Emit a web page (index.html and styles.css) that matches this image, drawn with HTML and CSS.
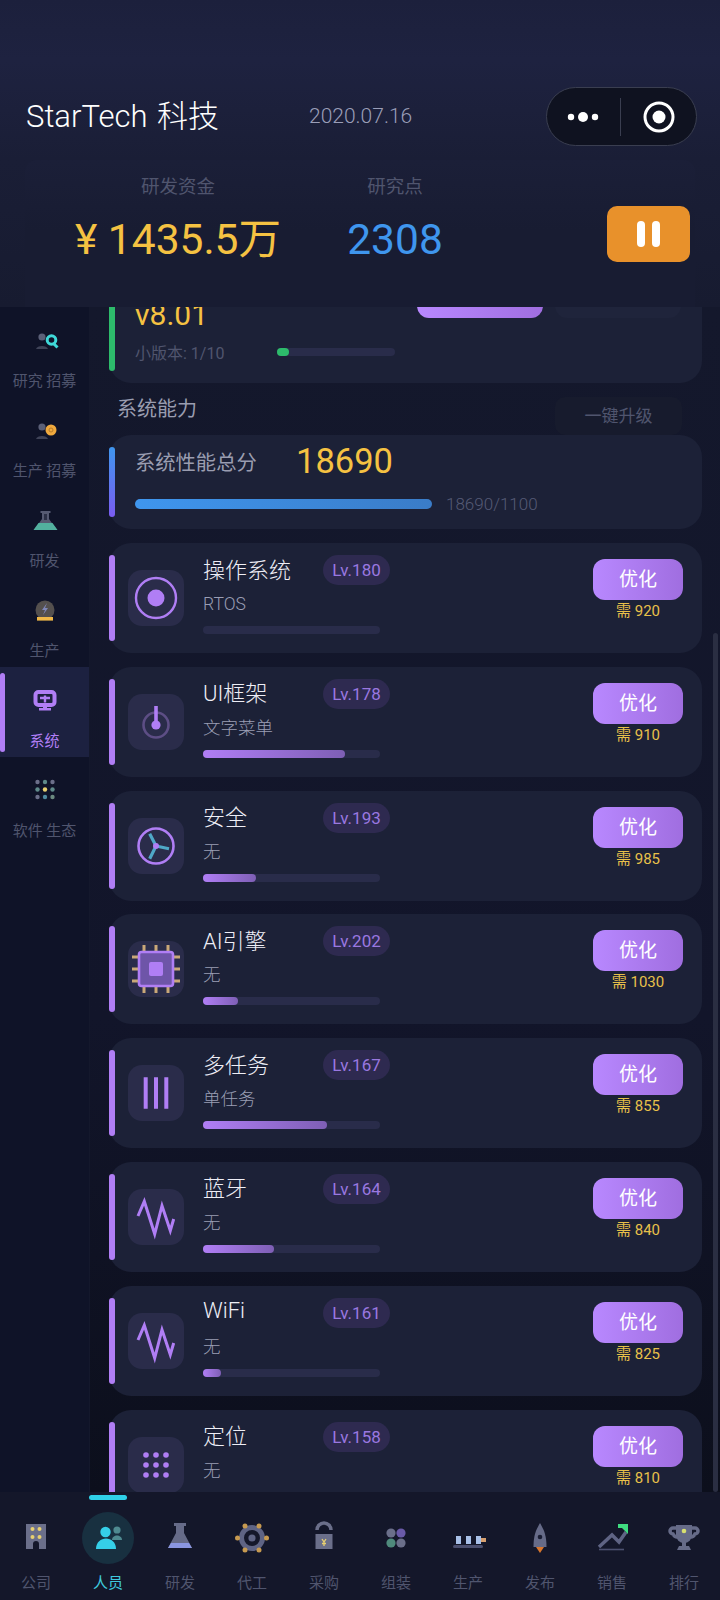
FILE: index.html
```html
<!DOCTYPE html>
<html lang="zh-CN">
<head>
    <meta charset="UTF-8">
    <meta name="viewport" content="width=device-width, initial-scale=1.0">
    <title>StarTech 科技</title>
    <link rel="stylesheet" href="styles.css">
</head>
<body>
    <header class="header">
        <div class="topBar">
            <div class="brand">StarTech 科技</div>
            <div class="date">2020.07.16</div>
            <div class="capsule">
                <svg class="capsuleDots" width="32" height="14" viewBox="0 0 32 14"><circle cx="4" cy="7" r="3.200" fill="#fff"/><circle cx="16" cy="7" r="5" fill="#fff"/><circle cx="28" cy="7" r="3.200" fill="#fff"/></svg>
                <span class="capsuleLine"></span>
                <svg class="capsuleTarget" width="34" height="34" viewBox="0 0 34 34"><circle cx="17" cy="17" r="14" fill="none" stroke="#fff" stroke-width="3"/><circle cx="17" cy="17" r="6.500" fill="#fff"/></svg>
            </div>
        </div>
        <div class="stats">
            <div class="stat statMoney">
                <div class="statLabel">研发资金</div>
                <div class="statValue yellow">¥ 1435.5万</div>
            </div>
            <div class="stat statPoints">
                <div class="statLabel">研究点</div>
                <div class="statValue blue">2308</div>
            </div>
            <div class="btnPause"><span></span><span></span></div>
        </div>
    </header>

    <div class="middle">
        <nav class="side">
            <div class="sideItem">
                <svg width="32" height="32" viewBox="0 0 32 32"><circle cx="13" cy="13" r="3.600" fill="#5b6078"/><path d="M7 25c1-4 11-4 12 0z" fill="#3f4358"/><circle cx="22.500" cy="16" r="4.300" fill="none" stroke="#3fd8d8" stroke-width="3"/><path d="M25 20l3.500 3.500" stroke="#3fd8d8" stroke-width="3"/></svg>
                <span>研究 招募</span>
            </div>
            <div class="sideItem">
                <svg width="32" height="32" viewBox="0 0 32 32"><circle cx="13" cy="13" r="3.600" fill="#5b6078"/><path d="M7 25c1-4 11-4 12 0z" fill="#3f4358"/><circle cx="22" cy="16" r="5.500" fill="#f0a93e"/><circle cx="22" cy="16" r="2" fill="none" stroke="#b87c28" stroke-width="1"/></svg>
                <span>生产 招募</span>
            </div>
            <div class="sideItem">
                <svg width="32" height="32" viewBox="0 0 32 32"><path d="M11.500 7h10v2h-1.500v6l8 11H5l8-11V9h-1.500z" fill="#565a72"/><path d="M15 10h3v6h-3z" fill="#2c3046"/><path d="M9.500 19h14l5 7H4.500z" fill="#52b09e"/></svg>
                <span>研发</span>
            </div>
            <div class="sideItem">
                <svg width="32" height="32" viewBox="0 0 32 32"><circle cx="16" cy="16" r="9.500" fill="#54504e"/><path d="M18 9l-5 7h3l-2 5 5-7h-3z" fill="#7f86b8"/><rect x="8" y="23" width="16" height="3.600" fill="#f0b848"/></svg>
                <span>生产</span>
            </div>
            <div class="sideItem sideActive">
                <svg width="32" height="32" viewBox="0 0 32 32"><rect x="6.500" y="8" width="19" height="13" rx="3" fill="none" stroke="#b07ef5" stroke-width="4"/><path d="M11 14h10M16 11.500v7" stroke="#b07ef5" stroke-width="2.400"/><path d="M14 21h4v3h4v2.600H10V24h4z" fill="#b07ef5"/></svg>
                <span>系统</span>
            </div>
            <div class="sideItem">
                <svg width="32" height="32" viewBox="0 0 32 32"><circle cx="8.500" cy="8" r="2.200" fill="#6b6f8a"/><circle cx="16" cy="8" r="2.200" fill="#5f8a8a"/><circle cx="23.500" cy="8" r="2.200" fill="#6b6f8a"/><circle cx="8.500" cy="15.500" r="2.200" fill="#5f8a8a"/><circle cx="16" cy="15.500" r="2.200" fill="#e8d070"/><circle cx="23.500" cy="15.500" r="2.200" fill="#5f8a8a"/><circle cx="8.500" cy="23" r="2.200" fill="#6b6f8a"/><circle cx="16" cy="23" r="2.200" fill="#4f8aa0"/><circle cx="23.500" cy="23" r="2.200" fill="#6b8a80"/></svg>
                <span>软件 生态</span>
            </div>
        </nav>

        <main class="content">
            <section class="card versionCard">
                <div class="cardBar barGreen"></div>
                <div class="versionInfo">
                    <div class="versionNum">v8.01</div>
                    <div class="versionRow">
                        <span class="versionSmall">小版本: 1/10</span>
                        <div class="track versionTrack"><div class="fill fillGreen" style="width:10%"></div></div>
                    </div>
                </div>
                <div class="versionBtn"></div>
                <div class="versionBtn2"></div>
            </section>

            <div class="sectionHead">
                <span class="sectionTitle">系统能力</span>
                <span class="btnAll">一键升级</span>
            </div>

            <section class="card totalCard">
                <div class="cardBar barBlue"></div>
                <div class="totalInfo">
                    <div class="totalTop">
                        <span class="totalLabel">系统性能总分</span>
                        <span class="totalValue">18690</span>
                    </div>
                    <div class="totalBottom">
                        <div class="totalTrack"></div>
                        <span class="totalText">18690/1100</span>
                    </div>
                </div>
            </section>

            <section class="card row">
                <div class="cardBar"></div>
                <div class="rowIcon"><svg width="56" height="56" viewBox="0 0 56 56"><circle cx="28" cy="28" r="20" fill="none" stroke="#b07ef5" stroke-width="2.400"/><circle cx="28" cy="28" r="8.500" fill="#b07ef5"/></svg></div>
                <div class="rowInfo">
                    <div class="rowHead"><span class="rowTitle">操作系统</span><span class="level">Lv.180</span></div>
                    <div class="rowSub">RTOS</div>
                    <div class="track"></div>
                </div>
                <div class="rowAction"><div class="btnOpt">优化</div><div class="cost">需 920</div></div>
            </section>

            <section class="card row">
                <div class="cardBar"></div>
                <div class="rowIcon"><svg width="56" height="56" viewBox="0 0 56 56"><circle cx="28" cy="31" r="12.500" fill="none" stroke="#5d4e85" stroke-width="2.600"/><path d="M28 12v16" stroke="#b07ef5" stroke-width="3.600"/><circle cx="28" cy="31" r="4.600" fill="#b07ef5"/></svg></div>
                <div class="rowInfo">
                    <div class="rowHead"><span class="rowTitle">UI框架</span><span class="level">Lv.178</span></div>
                    <div class="rowSub">文字菜单</div>
                    <div class="track"><div class="fill" style="width:80%"></div></div>
                </div>
                <div class="rowAction"><div class="btnOpt">优化</div><div class="cost">需 910</div></div>
            </section>

            <section class="card row">
                <div class="cardBar"></div>
                <div class="rowIcon"><svg width="56" height="56" viewBox="0 0 56 56"><circle cx="28" cy="28" r="17.500" fill="none" stroke="#b07ef5" stroke-width="2.600"/><path d="M28 28l-6.300-12.300M28 28l13 2.700M28 28l-6.300 12.700" stroke="#4fa8c8" stroke-width="3.200"/><circle cx="28" cy="28" r="3" fill="#b07ef5"/></svg></div>
                <div class="rowInfo">
                    <div class="rowHead"><span class="rowTitle">安全</span><span class="level">Lv.193</span></div>
                    <div class="rowSub">无</div>
                    <div class="track"><div class="fill" style="width:30%"></div></div>
                </div>
                <div class="rowAction"><div class="btnOpt">优化</div><div class="cost">需 985</div></div>
            </section>

            <section class="card row">
                <div class="cardBar"></div>
                <div class="rowIcon"><svg width="56" height="56" viewBox="0 0 56 56"><path d="M16 4v7M28 4v7M40 4v7M16 45v7M28 45v7M40 45v7M4 16h7M4 28h7M4 40h7M45 16h7M45 28h7M45 40h7" stroke="#c9a878" stroke-width="3"/><rect x="11" y="11" width="34" height="34" rx="2.500" fill="#6e55a8" stroke="#b07ef5" stroke-width="2.600"/><rect x="21" y="21" width="14" height="14" rx="2" fill="#b07ef5"/></svg></div>
                <div class="rowInfo">
                    <div class="rowHead"><span class="rowTitle">AI引擎</span><span class="level">Lv.202</span></div>
                    <div class="rowSub">无</div>
                    <div class="track"><div class="fill" style="width:20%"></div></div>
                </div>
                <div class="rowAction"><div class="btnOpt">优化</div><div class="cost">需 1030</div></div>
            </section>

            <section class="card row">
                <div class="cardBar"></div>
                <div class="rowIcon"><svg width="56" height="56" viewBox="0 0 56 56"><path d="M17.700 12.300v31.400M28 12.300v31.400M38.300 12.300v31.400" stroke="#b07ef5" stroke-width="4"/></svg></div>
                <div class="rowInfo">
                    <div class="rowHead"><span class="rowTitle">多任务</span><span class="level">Lv.167</span></div>
                    <div class="rowSub">单任务</div>
                    <div class="track"><div class="fill" style="width:70%"></div></div>
                </div>
                <div class="rowAction"><div class="btnOpt">优化</div><div class="cost">需 855</div></div>
            </section>

            <section class="card row">
                <div class="cardBar"></div>
                <div class="rowIcon"><svg width="56" height="56" viewBox="0 0 56 56"><path d="M10 27l6.300-14.700L26.700 45 34 16.700l8.300 25L45.700 30" fill="none" stroke="#b07ef5" stroke-width="3"/></svg></div>
                <div class="rowInfo">
                    <div class="rowHead"><span class="rowTitle">蓝牙</span><span class="level">Lv.164</span></div>
                    <div class="rowSub">无</div>
                    <div class="track"><div class="fill" style="width:40%"></div></div>
                </div>
                <div class="rowAction"><div class="btnOpt">优化</div><div class="cost">需 840</div></div>
            </section>

            <section class="card row">
                <div class="cardBar"></div>
                <div class="rowIcon"><svg width="56" height="56" viewBox="0 0 56 56"><path d="M10 27l6.300-14.700L26.700 45 34 16.700l8.300 25L45.700 30" fill="none" stroke="#b07ef5" stroke-width="3"/></svg></div>
                <div class="rowInfo">
                    <div class="rowHead"><span class="rowTitle">WiFi</span><span class="level">Lv.161</span></div>
                    <div class="rowSub">无</div>
                    <div class="track"><div class="fill" style="width:10%"></div></div>
                </div>
                <div class="rowAction"><div class="btnOpt">优化</div><div class="cost">需 825</div></div>
            </section>

            <section class="card row">
                <div class="cardBar"></div>
                <div class="rowIcon"><svg width="56" height="56" viewBox="0 0 56 56"><g fill="#b07ef5"><circle cx="18" cy="18" r="2.800"/><circle cx="28" cy="18" r="2.800"/><circle cx="38" cy="18" r="2.800"/><circle cx="18" cy="28" r="2.800"/><circle cx="28" cy="28" r="2.800"/><circle cx="38" cy="28" r="2.800"/><circle cx="18" cy="38" r="2.800"/><circle cx="28" cy="38" r="2.800"/><circle cx="38" cy="38" r="2.800"/></g></svg></div>
                <div class="rowInfo">
                    <div class="rowHead"><span class="rowTitle">定位</span><span class="level">Lv.158</span></div>
                    <div class="rowSub">无</div>
                    <div class="track"></div>
                </div>
                <div class="rowAction"><div class="btnOpt">优化</div><div class="cost">需 810</div></div>
            </section>
        </main>
        <div class="scrollThumb"></div>
    </div>

    <footer class="tabs">
        <div class="tab">
            <svg width="44" height="44" viewBox="0 0 44 44"><path d="M12 8h20v25H25v-5a3 3 0 0 0-6 0v5h-7z" fill="#6b6f8a"/><g fill="#e8d070"><circle cx="18.500" cy="13" r="2"/><circle cx="25.500" cy="13" r="2"/><circle cx="18.500" cy="21" r="2"/><circle cx="25.500" cy="21" r="2"/></g></svg>
            <span>公司</span>
        </div>
        <div class="tab tabActive">
            <div class="tabMark"></div>
            <div class="tabCircle"></div>
            <svg width="44" height="44" viewBox="0 0 44 44"><circle cx="31" cy="14" r="3.600" fill="#4f8a90"/><path d="M26 24c0-6 10-6 10 0z" fill="#4f8a90"/><circle cx="19.500" cy="16" r="5.200" fill="#35cfe8"/><path d="M10 33c0-14 20-14 20 0z" fill="#35cfe8"/></svg>
            <span>人员</span>
        </div>
        <div class="tab">
            <svg width="44" height="44" viewBox="0 0 44 44"><path d="M16 7h12v3h-2v7l8 15H10l8-15v-7h-2z" fill="#666b88"/><path d="M13 27h18l3 5H10z" fill="#8a96e0"/></svg>
            <span>研发</span>
        </div>
        <div class="tab">
            <svg width="44" height="44" viewBox="0 0 44 44"><circle cx="22" cy="22" r="10.500" fill="none" stroke="#5f6484" stroke-width="5"/><circle cx="22" cy="22" r="3.600" fill="#5f6484"/><g fill="#c79a50"><circle cx="15" cy="10" r="2.500"/><circle cx="29" cy="10" r="2.500"/><circle cx="7.500" cy="22" r="2.500"/><circle cx="36.500" cy="22" r="2.500"/><circle cx="15" cy="34" r="2.500"/><circle cx="29" cy="34" r="2.500"/></g></svg>
            <span>代工</span>
        </div>
        <div class="tab">
            <svg width="44" height="44" viewBox="0 0 44 44"><path d="M15 14a7 7 0 0 1 14 0" fill="none" stroke="#6b6f8a" stroke-width="3.500"/><path d="M13.500 18h17v15h-17z" fill="#6b6f8a"/><path d="M20 23l2 3 2-3M22 26v4M20 27.500h4" fill="none" stroke="#e8d070" stroke-width="1.300"/></svg>
            <span>采购</span>
        </div>
        <div class="tab">
            <svg width="44" height="44" viewBox="0 0 44 44"><circle cx="17" cy="17" r="4.600" fill="#6b6f8a"/><circle cx="27" cy="17" r="4.600" fill="#6a5aa8"/><circle cx="17" cy="27" r="4.600" fill="#4f8a7c"/><circle cx="27" cy="27" r="4.600" fill="#6b6f8a"/></svg>
            <span>组装</span>
        </div>
        <div class="tab">
            <svg width="44" height="44" viewBox="0 0 44 44"><g fill="#a8c0e8"><rect x="10" y="20" width="5" height="8"/><rect x="20" y="20" width="5" height="8"/><rect x="30" y="20" width="5" height="8"/></g><rect x="7" y="29" width="30" height="3" rx="1.500" fill="#4c5070"/><rect x="35" y="22" width="5" height="4" fill="#d8a070"/></svg>
            <span>生产</span>
        </div>
        <div class="tab">
            <svg width="44" height="44" viewBox="0 0 44 44"><path d="M22 7c4 7 6.500 12 6.500 24h-13C15.500 19 18 14 22 7z" fill="#666b88"/><circle cx="22" cy="21" r="2.300" fill="#1a1e34"/><path d="M18 31h8l-4 6z" fill="#d8762c"/></svg>
            <span>发布</span>
        </div>
        <div class="tab">
            <svg width="44" height="44" viewBox="0 0 44 44"><path d="M9 31l13-12 7 7 7-10" fill="none" stroke="#5f6484" stroke-width="3.500"/><path d="M9 33.500h25" stroke="#4c5070" stroke-width="1.600"/><path d="M28 8h10v10z" fill="#3fdc80"/><path d="M28 8h6v4h-6z" fill="#3fdc80"/></svg>
            <span>销售</span>
        </div>
        <div class="tab">
            <svg width="44" height="44" viewBox="0 0 44 44"><path d="M14 9h16v10a8 8 0 0 1-16 0z" fill="#666b88"/><path d="M14 12H11a3 3 0 0 0 0 6c1 2 3 3 4 3M30 12h3a3 3 0 0 1 0 6c-1 2-3 3-4 3" fill="none" stroke="#666b88" stroke-width="3.500"/><path d="M20 26h4v4h3l2 4H15l2-4h3z" fill="#666b88"/><circle cx="22" cy="15" r="2.300" fill="#d8e070"/></svg>
            <span>排行</span>
        </div>
    </footer>
</body>
</html>
```

FILE: styles.css
```css
*
{
    box-sizing: border-box;
}
body
{
    margin: 0px;
    width: 720px;
    height: 1600px;
    display: flex;
    flex-direction: column;
    overflow: hidden;
    background-color: #12162a;
    font-family: "Roboto", "Noto Sans CJK SC", sans-serif;
}

/* header */
.header
{
    height: 307px;
    flex-shrink: 0;
    background: linear-gradient(#1c203c, #1e2240 60px, #1a1e36 160px, #171b30);
}
.topBar
{
    height: 160px;
    padding: 87px 23px 0px 26px;
    display: flex;
    align-items: flex-start;
}
.brand
{
    width: 283px;
    height: 59px;
    line-height: 59px;
    font-size: 31px;
    font-weight: 300;
    word-spacing: 2px;
    color: #ffffff;
}
.date
{
    height: 59px;
    line-height: 59px;
    font-size: 21px;
    font-weight: 300;
    color: #9a9eb8;
}
.capsule
{
    margin-left: auto;
    width: 151px;
    height: 59px;
    border: 1.5px solid #3a3e50;
    border-radius: 30px;
    background-color: #0f1220;
    display: flex;
    align-items: center;
    padding-left: 20px;
}
.capsuleLine
{
    width: 1px;
    height: 38px;
    margin-left: 21px;
    background-color: #3a3e50;
}
.capsuleTarget
{
    margin-left: 21px;
}
.stats
{
    height: 147px;
    margin: 0px 25px;
    display: flex;
    align-items: flex-start;
    border-radius: 12px 12px 0px 0px;
    background: linear-gradient(#1b1f38, #181c32 70px);
}
.stat
{
    text-align: center;
}
.statMoney
{
    width: 306px;
}
.statPoints
{
    width: 128px;
}
.statLabel
{
    margin-top: 14px;
    height: 26px;
    line-height: 26px;
    font-size: 18.500px;
    color: #50556e;
}
.statValue
{
    margin-top: 14px;
    height: 52px;
    line-height: 52px;
    font-size: 42.500px;
    white-space: nowrap;
}
.yellow
{
    color: #f5c242;
}
.blue
{
    color: #3f96ee;
}
.btnPause
{
    margin: 46px 5px 0px auto;
    width: 83px;
    height: 56px;
    border-radius: 10px;
    background-color: #e8912b;
    display: flex;
    justify-content: center;
    align-items: center;
    gap: 7px;
}
.btnPause span
{
    width: 8px;
    height: 26px;
    border-radius: 4px;
    background-color: #ffffff;
}

/* middle */
.middle
{
    flex: 1;
    min-height: 0px;
    display: flex;
    position: relative;
}
.side
{
    width: 90px;
    flex-shrink: 0;
    background-color: #0f1328;
    border-right: 1px solid #14182c;
}
.sideItem
{
    height: 90px;
    padding-top: 17px;
    display: flex;
    flex-direction: column;
    align-items: center;
    font-size: 15px;
    color: #50556e;
}
.sideItem span
{
    margin-top: 14px;
    height: 22px;
    line-height: 22px;
}
.sideActive
{
    background-color: #1c2140;
    color: #b07ef5;
    position: relative;
}
.sideActive::before
{
    content: "";
    position: absolute;
    left: 0px;
    top: 6px;
    bottom: 5px;
    width: 5px;
    border-radius: 3px;
    background-color: #b07ef5;
}
.content
{
    flex: 1;
    min-width: 0px;
    padding: 0px 18px 0px 19px;
    overflow: hidden;
    background: linear-gradient(#14182c, #12152a 60%, #0c0f1c);
}
.card
{
    display: flex;
    border-radius: 22px;
    background-color: #1c2137;
}
.cardBar
{
    width: 6px;
    margin: 12px 0px;
    flex-shrink: 0;
    border-radius: 3px;
    background-color: #b07ef5;
}
.barGreen
{
    background-color: #2dbb6b;
}
.barBlue
{
    background: linear-gradient(#3f96ee, #7a5cf0);
}

/* version card */
.versionCard
{
    height: 100px;
    margin-top: -24px;
}
.versionInfo
{
    width: 302px;
    padding-left: 20px;
    flex-shrink: 0;
}
.versionNum
{
    margin-top: 12px;
    height: 40px;
    line-height: 40px;
    font-size: 30px;
    color: #f5c242;
}
.versionRow
{
    margin-top: 5px;
    height: 24px;
    display: flex;
    align-items: center;
}
.versionSmall
{
    width: 142px;
    font-size: 16px;
    color: #50556e;
}
.versionBtn
{
    width: 126px;
    height: 35px;
    border-radius: 0px 0px 12px 12px;
    background: linear-gradient(90deg, #b888ff, #a06ee0);
}
.versionBtn2
{
    width: 126px;
    height: 35px;
    margin-left: 12px;
    border-radius: 0px 0px 12px 12px;
    background-color: #1f243b;
}

/* section head */
.sectionHead
{
    height: 38px;
    margin: 14px 0px 0px 0px;
    padding: 0px 20px 0px 8px;
    display: flex;
    justify-content: space-between;
}
.sectionTitle
{
    height: 24px;
    line-height: 24px;
    font-size: 20px;
    color: #9a9db0;
}
.btnAll
{
    width: 127px;
    height: 38px;
    line-height: 38px;
    text-align: center;
    font-size: 17px;
    border-radius: 10px;
    color: #50556e;
    background-color: #171b2d;
}

/* total card */
.totalCard
{
    height: 94px;
}
.totalInfo
{
    padding-left: 20px;
    flex: 1;
}
.totalTop
{
    margin-top: 6px;
    height: 40px;
    display: flex;
    align-items: center;
}
.totalLabel
{
    width: 161px;
    font-size: 20.300px;
    color: #9a9db0;
}
.totalValue
{
    font-size: 34.500px;
    color: #f5c242;
}
.totalBottom
{
    margin-top: 18px;
    height: 10px;
    display: flex;
    align-items: center;
}
.totalTrack
{
    width: 297px;
    height: 10px;
    border-radius: 5px;
    background: linear-gradient(90deg, #3f96ee, #3a7cc8);
}
.totalText
{
    margin-left: 14px;
    font-size: 17px;
    font-weight: 300;
    color: #555a75;
}

/* rows */
.row
{
    height: 110px;
    margin-top: 13.800px;
}
.totalCard + .row
{
    margin-top: 14px;
}
.rowIcon
{
    width: 56px;
    height: 56px;
    margin: 27px 0px 0px 13px;
    flex-shrink: 0;
    border-radius: 14px;
    background-color: #2a2c4a;
}
.rowIcon svg
{
    display: block;
}
.rowInfo
{
    width: 187px;
    margin-left: 19px;
    padding-top: 12px;
}
.rowHead
{
    height: 30px;
    display: flex;
    justify-content: space-between;
    align-items: center;
}
.rowTitle
{
    margin-bottom: 5px;
    font-size: 22px;
    font-weight: 300;
    color: #eeeef6;
}
.level
{
    width: 67px;
    height: 30px;
    line-height: 30px;
    text-align: center;
    font-size: 17px;
    border-radius: 15px;
    color: #9a78e0;
    background-color: #2e2a50;
}
.rowSub
{
    margin-top: 7px;
    height: 24px;
    line-height: 24px;
    font-size: 17.500px;
    font-weight: 300;
    color: #9a9eb4;
}
.track
{
    width: 177px;
    height: 8px;
    margin-top: 10px;
    border-radius: 4px;
    background-color: #292c4a;
}
.track.versionTrack
{
    width: 118px;
    margin-top: 0px;
}
.fill
{
    height: 8px;
    border-radius: 4px;
    background: linear-gradient(90deg, #b07ef5, #7e5fb5);
}
.fill.fillGreen
{
    background: #2dbb6b;
}
.rowAction
{
    width: 90px;
    margin-left: auto;
    margin-right: 19px;
    padding-top: 16px;
    text-align: center;
}
.btnOpt
{
    height: 41px;
    line-height: 41px;
    font-size: 19px;
    border-radius: 12px;
    color: #ffffff;
    background: linear-gradient(90deg, #b888ff, #a06ee0);
}
.cost
{
    margin-top: 1px;
    height: 20px;
    line-height: 20px;
    font-size: 15px;
    color: #e8c04a;
}
.scrollThumb
{
    position: absolute;
    right: 2px;
    top: 326px;
    bottom: 0px;
    width: 5px;
    border-radius: 3px;
    background-color: #2a2e42;
}

/* bottom tabs */
.tabs
{
    height: 108px;
    flex-shrink: 0;
    display: flex;
    background-color: #14172a;
}
.tab
{
    width: 72px;
    padding-top: 24px;
    display: flex;
    flex-direction: column;
    align-items: center;
    position: relative;
    font-size: 15px;
    color: #50556e;
}
.tab svg
{
    position: relative;
}
.tab span
{
    margin-top: 12px;
    height: 22px;
    line-height: 22px;
}
.tabActive
{
    color: #3fc8dd;
}
.tabMark
{
    position: absolute;
    left: 17px;
    top: 3px;
    width: 38px;
    height: 5px;
    border-radius: 3px;
    background-color: #2fd0e8;
}
.tabCircle
{
    position: absolute;
    left: 10px;
    top: 20px;
    width: 52px;
    height: 52px;
    border-radius: 50%;
    background-color: #183040;
}
```
